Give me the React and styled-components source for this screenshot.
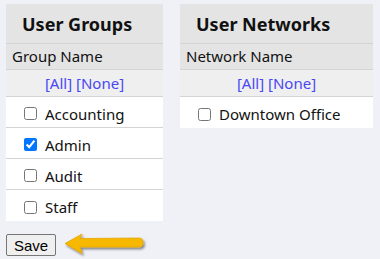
import React from "react";
import styled, { createGlobalStyle } from "styled-components";

const Global = createGlobalStyle`
  body {
    margin: 0;
    background: #f0f1f7;
    font-family: "Noto Sans", "Open Sans", sans-serif;
    color: #111;
  }
`;

const Page = styled.div`
  padding: 4px 6px;
`;

const Panels = styled.div`
  display: flex;
  align-items: flex-start;
  gap: 17px;
`;

const Panel = styled.div`
  width: ${(props) => props.width}px;
  background: #fff;
`;

const Title = styled.div`
  height: 40px;
  box-sizing: border-box;
  background: #e4e4e4;
  padding: 8px 0 0 16px;
  font-size: 18px;
  font-weight: bold;
  border-bottom: 1px solid #d4d4d4;
`;

const ColHead = styled.div`
  height: 26px;
  box-sizing: border-box;
  background: #e4e4e4;
  padding: 2px 0 0 6px;
  font-size: 15px;
  border-bottom: 1px solid #d4d4d4;
`;

const Toggles = styled.div`
  height: 27px;
  box-sizing: border-box;
  background: #efefef;
  padding-top: 3px;
  text-align: center;
  font-size: 15px;
  color: #4848f4;
  border-bottom: 1px solid #d4d4d4;
  a {
    color: inherit;
    text-decoration: none;
  }
`;

const Row = styled.label`
  display: flex;
  align-items: center;
  height: 31px;
  box-sizing: border-box;
  padding: 3px 0 0 18px;
  font-size: 15px;
  border-bottom: ${(props) => (props.last ? "none" : "1px solid #d4d4d4")};
  input {
    margin: 0 8px 0 0;
    width: 13px;
    height: 13px;
  }
`;

const Footer = styled.div`
  display: flex;
  align-items: center;
  gap: 7px;
  margin-top: 11px;
`;

const Button = styled.button`
  font-family: "Liberation Sans", Arial, sans-serif;
  font-size: 15px;
  height: 22px;
  padding: 0 7px;
  background: #efefef;
  border: 1px solid #767676;
  border-radius: 2px;
  color: #000;
`;

function Arrow() {
  return (
    <svg width="84" height="26" viewBox="0 0 84 26">
      <defs>
        <filter id="sh" x="-10%" y="-30%" width="130%" height="170%">
          <feDropShadow dx="1.5" dy="2" stdDeviation="1.2" floodColor="#000" floodOpacity="0.45" />
        </filter>
      </defs>
      <path
        d="M2 11.5 L19 2 L17 6.5 L76 6 Q80 6 80 10.5 Q80 15 76 15 L17 15 L19 21.5 Z"
        fill="#f6b800"
        stroke="#e3a600"
        strokeWidth="0.8"
        strokeLinejoin="round"
        filter="url(#sh)"
      />
    </svg>
  );
}

function Table({ title, head, items, width }) {
  return (
    <Panel width={width}>
      <Title>{title}</Title>
      <ColHead>{head}</ColHead>
      <Toggles>
        <a href="#">[All]</a> <a href="#">[None]</a>
      </Toggles>
      {items.map((it, i) => (
        <Row key={it.name} last={i === items.length - 1}>
          <input type="checkbox" defaultChecked={it.checked} />
          {it.name}
        </Row>
      ))}
    </Panel>
  );
}

export default function App() {
  return (
    <Page>
      <Global />
      <Panels>
        <Table
          title="User Groups"
          head="Group Name"
          width={157}
          items={[
            { name: "Accounting" },
            { name: "Admin", checked: true },
            { name: "Audit" },
            { name: "Staff" },
          ]}
        />
        <Table
          title="User Networks"
          head="Network Name"
          width={193}
          items={[{ name: "Downtown Office" }]}
        />
      </Panels>
      <Footer>
        <Button>Save</Button>
        <Arrow />
      </Footer>
    </Page>
  );
}
